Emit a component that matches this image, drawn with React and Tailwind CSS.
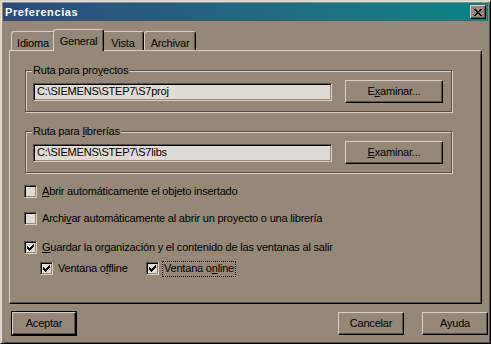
import React from "react";

const F = "font-['Liberation_Sans',Arial,sans-serif]";

function Check() {
  return (
    <svg width="7" height="7" viewBox="0 0 7 7" shapeRendering="crispEdges">
      <rect x="6" y="0" width="1" height="1" fill="#000" />
      <rect x="5" y="1" width="2" height="1" fill="#000" />
      <rect x="0" y="2" width="1" height="1" fill="#000" />
      <rect x="4" y="2" width="3" height="1" fill="#000" />
      <rect x="0" y="3" width="2" height="1" fill="#000" />
      <rect x="3" y="3" width="3" height="1" fill="#000" />
      <rect x="0" y="4" width="5" height="1" fill="#000" />
      <rect x="1" y="5" width="3" height="1" fill="#000" />
      <rect x="2" y="6" width="1" height="1" fill="#000" />
    </svg>
  );
}

function Box({ checked }) {
  return (
    <div className="w-[13px] h-[13px] shrink-0 flex items-center justify-center bg-[#e0dbd4] border border-t-[#5a5046] border-l-[#5a5046] border-b-[#d8d0c4] border-r-[#d8d0c4] shadow-[inset_1px_1px_0_#000,inset_-1px_-1px_0_#958878]">
      {checked && <Check />}
    </div>
  );
}

function Btn({ children, w = "w-[98px]" }) {
  return (
    <div className={`${w} h-[23px] flex items-center justify-center bg-[#958878] border border-t-[#d8d0c4] border-l-[#d8d0c4] border-b-black border-r-black shadow-[inset_-1px_-1px_0_#5a5046] text-black`}>
      {children}
    </div>
  );
}

function Group({ label, path, btn }) {
  return (
    <div className="relative w-[427px] h-[42px] border border-[#5a5046] shadow-[1px_1px_0_#d8d0c4,inset_1px_1px_0_#d8d0c4] flex items-start pl-[7px] pt-[9px]">
      <span className="absolute left-[6px] top-[-8px] bg-[#958878] px-[1px] leading-[14px]">
        {label}
      </span>
      <div className="flex items-center">
        <div className="w-[299px] h-[18px] flex items-center pl-[2px] bg-[#e0dbd4] border border-t-[#5a5046] border-l-[#5a5046] border-b-[#d8d0c4] border-r-[#d8d0c4] shadow-[inset_1px_1px_0_#000,inset_-1px_-1px_0_#958878]">
          <span className="pl-[1px]">{path}</span>
        </div>
        <div className="ml-[13px]">
          <Btn>{btn}</Btn>
        </div>
      </div>
    </div>
  );
}

function Tab({ children, selected, w }) {
  if (selected) {
    return (
      <div
        className={`relative z-10 -mx-[2px] -mb-[1px] h-[22px] ${w} flex items-start justify-center pt-[3px] bg-[#958878] border-t border-l border-r border-t-[#d8d0c4] border-l-[#d8d0c4] border-r-black rounded-t-[3px] shadow-[inset_-1px_0_0_#5a5046]`}
      >
        {children}
      </div>
    );
  }
  return (
    <div
      className={`h-[19px] ${w} flex items-start justify-center pt-[3px] bg-[#958878] border-t border-l border-r border-t-[#d8d0c4] border-l-[#d8d0c4] border-r-black rounded-t-[3px] shadow-[inset_-1px_0_0_#5a5046]`}
    >
      {children}
    </div>
  );
}

export default function App() {
  return (
    <div
      className={`${F} text-[11px] tracking-[-0.2px] text-black w-[491px] h-[344px] bg-[#958878] border border-t-[#d8d0c4] border-l-[#d8d0c4] border-b-black border-r-black shadow-[inset_1px_1px_0_#e8e2da,inset_-1px_-1px_0_#5a5046] p-[2px] flex flex-col`}
    >
      {/* Title bar */}
      <div className="h-[18px] flex items-center justify-between bg-gradient-to-r from-[#2c4a7c] to-[#028484] pl-[2px] pr-[2px]">
        <span className="font-bold text-white text-[11px] tracking-[0.6px]">Preferencias</span>
        <div className="w-[16px] h-[14px] flex items-center justify-center bg-[#958878] border border-t-[#d8d0c4] border-l-[#d8d0c4] border-b-black border-r-black shadow-[inset_-1px_-1px_0_#5a5046]">
          <svg width="8" height="7" viewBox="0 0 8 7" shapeRendering="crispEdges">
            <path d="M0 0h2v1h-2zM6 0h2v1h-2zM1 1h2v1h-2zM5 1h2v1h-2zM2 2h4v1h-4zM3 3h2v1h-2zM2 4h4v1h-4zM1 5h2v1h-2zM5 5h2v1h-2zM0 6h2v1h-2zM6 6h2v1h-2z" fill="#000" />
          </svg>
        </div>
      </div>

      <div className="ml-[6px] mt-[8px] flex flex-col">
        {/* Tabs */}
        <div className="flex items-end h-[21px] pl-[2px]">
          <Tab w="w-[44px]">Idioma</Tab>
          <Tab selected w="w-[51px]">General</Tab>
          <Tab w="w-[42px]">Vista</Tab>
          <Tab w="w-[52px]">Archivar</Tab>
        </div>

        {/* Panel */}
        <div className="w-[473px] h-[254px] border border-t-[#d8d0c4] border-l-[#d8d0c4] border-b-black border-r-black shadow-[inset_-1px_-1px_0_#5a5046] flex flex-col pl-[15px] pt-[19px]">
          <Group
            label={
              <span>
                Ruta para pro<u>y</u>ectos
              </span>
            }
            path="C:\SIEMENS\STEP7\S7proj"
            btn={
              <span>
                E<u>x</u>aminar...
              </span>
            }
          />
          <div className="mt-[19px]">
            <Group
              label={
                <span>
                  Ruta para <u>l</u>ibrerías
                </span>
              }
              path="C:\SIEMENS\STEP7\S7libs"
              btn={
                <span>
                  <u>E</u>xaminar...
                </span>
              }
            />
          </div>

          <div className="ml-[-1px] mt-[12px] flex items-center h-[13px] gap-[5px]">
            <Box />
            <span>
              <u>A</u>brir automáticamente el objeto insertado
            </span>
          </div>
          <div className="ml-[-1px] mt-[14px] flex items-center h-[13px] gap-[5px]">
            <Box />
            <span>
              Archi<u>v</u>ar automáticamente al abrir un proyecto o una librería
            </span>
          </div>
          <div className="ml-[-1px] mt-[16px] flex items-center h-[13px] gap-[5px]">
            <Box checked />
            <span>
              <u>G</u>uardar la organización y el contenido de las ventanas al salir
            </span>
          </div>
          <div className="ml-[15px] mt-[8px] flex items-center h-[13px]">
            <Box checked />
            <span className="ml-[5px] w-[88px]">
              Ventana o<u>f</u>fline
            </span>
            <Box checked />
            <span className="ml-[3px] px-[1px] h-[16px] flex items-center border border-dotted border-black">
              Ventana o<u>n</u>line
            </span>
          </div>
        </div>

        {/* Buttons */}
        <div className="mt-[7px] flex items-center pl-[2px]">
          <div className="border border-black">
            <Btn w="w-[64px]">
              <span className="h-[21px] flex items-center">Aceptar</span>
            </Btn>
          </div>
          <div className="ml-auto flex gap-[18px]">
            <Btn w="w-[66px]">Cancelar</Btn>
            <Btn w="w-[66px]">Ayuda</Btn>
          </div>
        </div>
      </div>
    </div>
  );
}
